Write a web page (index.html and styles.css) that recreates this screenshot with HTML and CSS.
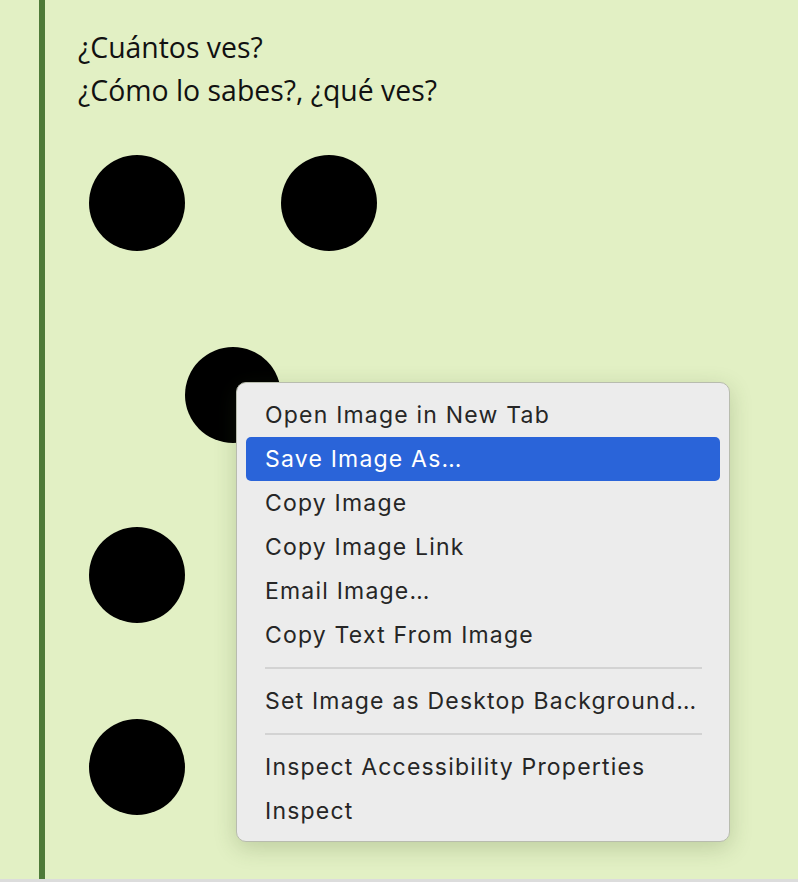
FILE: index.html
```html
<!DOCTYPE html>
<html lang="es">
<head>
<meta charset="utf-8">
<link rel="stylesheet" href="styles.css">
</head>
<body>
<div class="page">
  <div class="quote">
    <p class="line">¿Cuántos ves?</p>
    <p class="line">¿Cómo lo sabes?, ¿qué ves?</p>
    <svg class="dots" width="288" height="660" viewBox="0 0 288 660" aria-label="Puntos">
      <circle cx="48" cy="48" r="48"/>
      <circle cx="240" cy="48" r="48"/>
      <circle cx="144" cy="240" r="48"/>
      <circle cx="48" cy="420" r="48"/>
      <circle cx="48" cy="612" r="48"/>
    </svg>
  </div>
  <div class="bottom"></div>
</div>
<div class="menu">
  <div class="item">Open Image in New Tab</div>
  <div class="item active">Save Image As…</div>
  <div class="item">Copy Image</div>
  <div class="item">Copy Image Link</div>
  <div class="item">Email Image…</div>
  <div class="item">Copy Text From Image</div>
  <div class="sep"></div>
  <div class="item">Set Image as Desktop Background…</div>
  <div class="sep"></div>
  <div class="item">Inspect Accessibility Properties</div>
  <div class="item">Inspect</div>
</div>
</body>
</html>
```
FILE: styles.css
```css
html, body {
  margin: 0;
  padding: 0;
}
body {
  width: 798px;
  height: 882px;
  overflow: hidden;
  background: #e2f0c4;
  position: relative;
}
.page {
  display: flex;
  flex-direction: column;
  height: 882px;
}
.quote {
  margin-left: 39px;
  border-left: 6px solid #4e7a38;
  padding: 26px 0 0 33px;
  height: 853px;
  box-sizing: content-box;
}
.line {
  margin: 0;
  font-family: "Open Sans", "Noto Sans", sans-serif;
  font-size: 28.4px;
  line-height: 43px;
  color: #111;
}
.dots {
  display: block;
  margin: 43px 0 0 11px;
  fill: #000;
}
.bottom {
  height: 3px;
  background: #dcdcdc;
}
.menu {
  position: absolute;
  left: 236px;
  top: 382px;
  width: 494px;
  height: 460px;
  box-sizing: border-box;
  padding: 10px 9px;
  background: #ececec;
  border: 1px solid #b8bcae;
  border-radius: 10px;
  box-shadow: 0 6px 22px rgba(60, 80, 30, 0.22);
  font-family: Inter, "Noto Sans", sans-serif;
  font-size: 23px;
  letter-spacing: 1.2px;
  color: #262626;
}
.item {
  height: 44px;
  line-height: 44px;
  padding-left: 19px;
  border-radius: 5px;
  white-space: nowrap;
}
.item.active {
  background: #2a64d9;
  color: #fff;
}
.sep {
  height: 2px;
  margin: 10px 18px 10px 19px;
  background: #d3d3d3;
}
```
